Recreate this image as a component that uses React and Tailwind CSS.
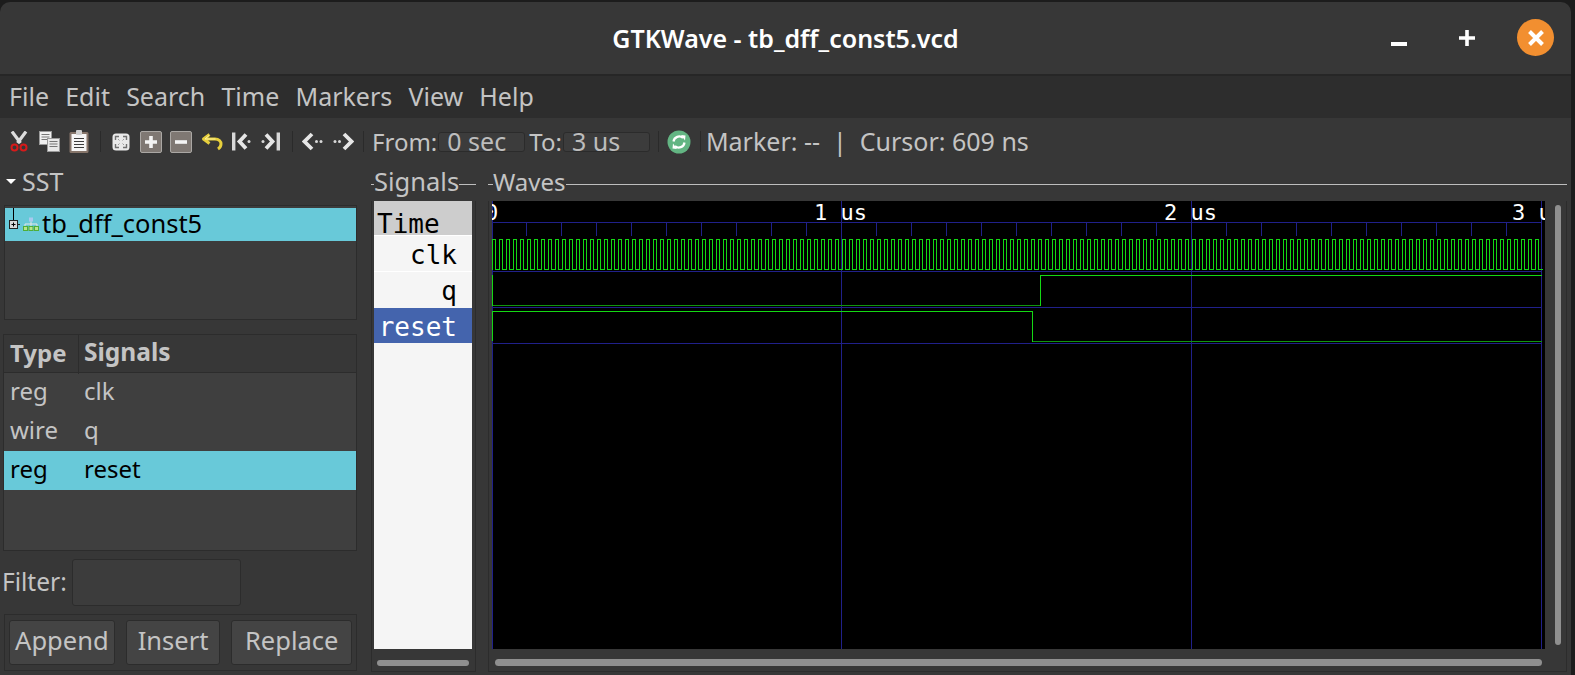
// GTKWave window: title bar, menu, toolbar, SST tree, signal names, wave view
import React from 'react'

const UI_FONT = "font-['Noto_Sans',sans-serif]"
const MONO_FONT = "font-['DejaVu_Sans_Mono',monospace]"
const GRID = '#20208a'
const GREEN = '#14d814'
const GREEN_LOW = '#0f960f'

// clk trace: 7px period, rising edges on the multiples of 7
function clkPath() {
  let d = 'M0.5 68.5'
  for (let x = 0; x < 1049; x += 7) {
    d += ` V38.5 H${x + 3.5} V68.5 H${x + 7.5}`
  }
  return d
}

const TICKS = Array.from({ length: 29 }, (_, i) => i + 1).map((i) => i * 35 - 1)

function WaveView() {
  return (
    <svg width="1053" height="448" className="block shrink-0 bg-black" shapeRendering="crispEdges">
      {/* ruler */}
      <line x1="0" x2="1050" y1="21.5" y2="21.5" stroke={GRID} />
      {TICKS.map((x) => (
        <line key={x} x1={x + 0.5} x2={x + 0.5} y1="21" y2="35" stroke={GRID} />
      ))}
      {/* major grid */}
      <line x1="0.5" x2="0.5" y1="0" y2="448" stroke={GRID} />
      <line x1="349.5" x2="349.5" y1="0" y2="448" stroke={GRID} />
      <line x1="699.5" x2="699.5" y1="0" y2="448" stroke={GRID} />
      <line x1="1049.5" x2="1049.5" y1="0" y2="448" stroke={GRID} />
      {/* row separators */}
      <line x1="0" x2="1050" y1="70.5" y2="70.5" stroke={GRID} />
      <line x1="0" x2="1050" y1="106.5" y2="106.5" stroke={GRID} />
      <line x1="0" x2="1050" y1="142.5" y2="142.5" stroke={GRID} />
      {/* time labels */}
      <g fill="#fff" fontFamily="DejaVu Sans Mono" fontSize="22" shapeRendering="auto">
        <text x="-7" y="19">0</text>
        <text x="322" y="19">1 us</text>
        <text x="672" y="19">2 us</text>
        <text x="1020" y="19">3 us</text>
      </g>
      {/* clk */}
      <path d={clkPath()} fill="none" stroke={GREEN} />
      {/* q */}
      <path d="M0.5 74 V104.5" fill="none" stroke={GREEN} />
      <path d="M0.5 104.5 H548.5" fill="none" stroke={GREEN_LOW} />
      <path d="M548.5 104.5 V74.5 H1050" fill="none" stroke={GREEN} />
      {/* reset */}
      <path d="M0.5 140 V110.5 H540.5 V140.5" fill="none" stroke={GREEN} />
      <path d="M540.5 140.5 H1050" fill="none" stroke={GREEN_LOW} />
    </svg>
  )
}

function Scissors() {
  return (
    <svg width="18" height="21" viewBox="0 0 18 21" className="shrink-0">
      <path d="M2 0.500 L10.500 12 M16 0.500 L7.500 12" stroke="#dcdcdc" strokeWidth="3.200" />
      <circle cx="4.500" cy="16.500" r="3" fill="none" stroke="#d71a1a" strokeWidth="2" />
      <circle cx="13.500" cy="16.500" r="3" fill="none" stroke="#d71a1a" strokeWidth="2" />
    </svg>
  )
}

function Copy() {
  return (
    <svg width="21" height="21" viewBox="0 0 21 21" className="shrink-0">
      <rect x="0.500" y="0.500" width="12" height="13" fill="#f0f0f0" stroke="#9a9a9a" />
      <path d="M2.500 3.500h8M2.500 6h8M2.500 8.500h8" stroke="#777" />
      <rect x="8.500" y="7.500" width="12" height="13" fill="#e8e8e8" stroke="#9a9a9a" />
      <path d="M10.500 10.500h8M10.500 13h8M10.500 15.500h8" stroke="#777" />
    </svg>
  )
}

function Paste() {
  return (
    <svg width="20" height="23" viewBox="0 0 20 23" className="shrink-0">
      <rect x="0.500" y="2" width="19" height="21" rx="1.500" fill="#86756a" />
      <rect x="2.500" y="4" width="15" height="17" fill="#f6f6f6" />
      <rect x="7" y="0" width="6" height="5" rx="1" fill="#cfcfcf" />
      <path d="M5 8.500h10M5 11.500h10M5 14.500h10M5 17.500h10" stroke="#3c3c3c" strokeWidth="1.200" />
    </svg>
  )
}

function ZoomFit() {
  return (
    <svg width="18" height="18" viewBox="0 0 18 18" className="shrink-0">
      <rect x="0.500" y="0.500" width="17" height="17" rx="3.500" fill="#e9e9e9" />
      <path d="M3.500 7V3.500H7M11 3.500h3.500V7M14.500 11v3.500H11M7 14.500H3.500V11" fill="none" stroke="#707070" strokeWidth="1.400" />
      <path d="M6 6l1.500 1.500M12 6l-1.500 1.500M12 12l-1.500-1.500M6 12l1.500-1.500" stroke="#9a9a9a" />
    </svg>
  )
}

function SquareBtn({ plus }) {
  return (
    <svg width="22" height="22" viewBox="0 0 22 22" className="shrink-0">
      <rect x="0.500" y="0.500" width="21" height="21" rx="1.500" fill="#7f7873" stroke="#aaa7a4" />
      <path d={plus ? 'M11 5v12M5 11h12' : 'M5 11h12'} stroke="#f4f4f4" strokeWidth="3.600" />
    </svg>
  )
}

function Undo() {
  return (
    <svg width="22" height="18" viewBox="0 0 22 18" className="shrink-0">
      <path d="M8.500 1.500 2.500 6l6 4.500M3 6h11c4 0 6 2.500 6 5 0 2.500-1.500 4-3 5" fill="none" stroke="#e6cf3c" strokeWidth="3" strokeLinejoin="round" />
      <path d="M8 2.500 4 6h10.500" fill="none" stroke="#fff3a0" strokeWidth="1" />
    </svg>
  )
}

// arrow head with trailing dots; the bar variants stop at a vertical line
function Chevron({ flip, bar }) {
  return (
    <svg width="21" height="19" viewBox="0 0 21 19" className="shrink-0">
      <g transform={flip ? 'translate(21 0) scale(-1 1)' : undefined}>
        {bar ? <rect x="1" y="0.500" width="3.400" height="18" fill="#d8d8d8" /> : null}
        <path d={bar ? 'M15 2.500 8.500 9.500 15 16.500' : 'M10 2 2.500 9.500 10 17'} fill="none" stroke="#e6e6e6" strokeWidth="3.800" />
        <circle cx={bar ? 18 : 14.500} cy="9.500" r="1.500" fill="#d8d8d8" />
        {bar ? null : <circle cx="19" cy="9.500" r="1.500" fill="#d8d8d8" />}
      </g>
    </svg>
  )
}

function Refresh() {
  return (
    <svg width="24" height="24" viewBox="0 0 24 24" className="shrink-0">
      <circle cx="12" cy="12" r="11.500" fill="#63b583" />
      <path d="M6.500 11.500a5.700 5.700 0 0 1 9.500-3.500" fill="none" stroke="#fff" strokeWidth="2.200" />
      <path d="M17.500 12.500a5.700 5.700 0 0 1-9.500 3.500" fill="none" stroke="#fff" strokeWidth="2.200" />
      <path d="M14 5 18.500 5.500 18 10.500ZM10 19 5.500 18.500 6 13.500Z" fill="#fff" />
    </svg>
  )
}

// expander box, its tree line and the module icon in front of the SST row
function TreeIcon() {
  return (
    <svg width="36" height="33" viewBox="0 0 36 33" className="shrink-0">
      <path d="M8.500 0v12" stroke="#000" />
      <rect x="4.500" y="12.500" width="8" height="8" fill="#d9d9d9" stroke="#222" />
      <path d="M6.500 16.500h4M8.500 14.500v4" stroke="#000" />
      <path d="M13 16.500h2" stroke="#222" />
      <rect x="24" y="9.500" width="4" height="4" fill="#a9c9ef" />
      <path d="M26 13.500V16M20 18v-2h12v2M26 16v2" fill="none" stroke="#e6e6e6" />
      <rect x="18.500" y="18.500" width="4" height="4" fill="#b7e58c" stroke="#4fae3a" />
      <rect x="24" y="18.500" width="4" height="4" fill="#b7e58c" stroke="#4fae3a" />
      <rect x="29.500" y="18.500" width="4" height="4" fill="#b7e58c" stroke="#4fae3a" />
    </svg>
  )
}

function Sep() {
  return <div className="h-[21px] w-px shrink-0 bg-[#2a2a2a]" />
}

function Cell({ w, children }) {
  return <div className={`flex shrink-0 justify-center ${w}`}>{children}</div>
}

function TimeField({ w, gap, text }) {
  return (
    <div className={`h-[20px] shrink-0 overflow-hidden rounded-[3px] border border-[#2b2b2b] bg-[#3c3c3c] pl-[8px] text-[25px] leading-[18px] text-[#bdbdbd] ${gap} ${w}`}>
      <span className="block -translate-y-[1px] whitespace-pre">{text}</span>
    </div>
  )
}

function Toolbar() {
  return (
    <div className="flex h-[47px] shrink-0 items-center text-[24px] text-[#c4c4c4]">
      <Cell w="w-[38px]"><Scissors /></Cell>
      <Cell w="w-[22px]"><Copy /></Cell>
      <Cell w="w-[38px]"><Paste /></Cell>
      <div className="ml-[2px]"><Sep /></div>
      <Cell w="w-[40px]"><ZoomFit /></Cell>
      <Cell w="w-[20px]"><SquareBtn plus /></Cell>
      <Cell w="w-[40px]"><SquareBtn /></Cell>
      <Cell w="w-[21px]"><Undo /></Cell>
      <Cell w="w-[39px]"><Chevron bar /></Cell>
      <Cell w="w-[18px]"><Chevron flip bar /></Cell>
      <div className="ml-[13px]"><Sep /></div>
      <Cell w="w-[39px]"><Chevron /></Cell>
      <Cell w="w-[22px]"><Chevron flip /></Cell>
      <div className="ml-[9px]"><Sep /></div>
      <span className="ml-[8px] leading-none">From:</span>
      <TimeField w="w-[87px]" gap="ml-[1px]" text="0 sec" />
      <span className="ml-[4px] leading-none">To:</span>
      <TimeField w="w-[87px]" gap="ml-[1px]" text="3 us" />
      <div className="ml-[8px]"><Sep /></div>
      <div className="ml-[8px]"><Refresh /></div>
      <div className="ml-[9px]"><Sep /></div>
      <span className="ml-[5px] text-[25px] leading-none whitespace-pre">Marker: --  |  Cursor: 609 ns</span>
    </div>
  )
}

function FrameHeader({ label, dash, size }) {
  return (
    <div className="flex h-[36px] items-center">
      <div className={`h-px translate-y-[1px] bg-[#bdbdbd] ${dash}`} />
      <span className={`-translate-y-[1px] leading-none text-[#c4c4c4] ${size}`}>{label}</span>
      <div className="h-px flex-1 translate-y-[1px] bg-[#bdbdbd]" />
    </div>
  )
}

const SIGNAL_ROWS = [
  { name: 'clk', type: 'reg' },
  { name: 'q', type: 'wire' },
  { name: 'reset', type: 'reg', selected: true },
]

export default function App() {
  return (
    <div className={`h-[675px] w-[1575px] overflow-hidden bg-[#1c1c1c] pt-[2px] ${UI_FONT}`}>
      <div className="flex h-[673px] w-[1571px] flex-col rounded-t-[10px] bg-[#373737]">
        {/* Title bar */}
        <div className="relative flex h-[72px] shrink-0 items-center justify-center pt-[1px]">
          <span className="text-[25px] font-semibold text-white">GTKWave - tb_dff_const5.vcd</span>
          <div className="absolute right-[17px] top-[17px] flex h-[37px] w-[37px] items-center justify-center rounded-full bg-[#f28f30]">
            <svg width="20" height="20" viewBox="0 0 20 20"><path d="M3.500 3.500l13 13M16.500 3.500l-13 13" stroke="#fff" strokeWidth="4" /></svg>
          </div>
          <div className="absolute right-[96px] top-[28px] h-[16px] w-[16px]">
            <svg width="16" height="16" viewBox="0 0 16 16"><path d="M0 8h16M8 0v16" stroke="#fff" strokeWidth="3.600" /></svg>
          </div>
          <div className="absolute left-[1391px] top-[40px] h-[4px] w-[16px] bg-white" />
        </div>
        {/* Menu bar */}
        <div className="flex h-[44px] shrink-0 items-center gap-[16.200px] border-t-2 border-[#262626] bg-[#2d2d2d] pb-[2px] pl-[9px] text-[25px] leading-none text-[#c4c4c4]">
          {['File', 'Edit', 'Search', 'Time', 'Markers', 'View', 'Help'].map((m) => (
            <span key={m}>{m}</span>
          ))}
        </div>
        <Toolbar />
        {/* Main panes */}
        <div className="flex min-h-0 flex-1">
          {/* SST pane */}
          <div className="flex w-[371px] shrink-0 flex-col pl-[4px] pr-[14px] text-[24px] leading-none text-[#c4c4c4]">
            <div className="flex h-[40px] items-center gap-[6px] pb-[8px] pl-[2px]">
              <div className="h-0 w-0 border-x-[5px] border-t-[5px] border-x-transparent border-t-white" />
              <span className="text-[25px]">SST</span>
            </div>
            <div className="h-[115px] shrink-0 border border-[#2c2c2c] bg-[#3c3c3c] pt-[2px]">
              <div className="flex h-[33px] items-center bg-[#68c9d9] text-[25.500px] text-black">
                <TreeIcon />
                <span className="ml-[1px] pb-[1px]">tb_dff_const5</span>
              </div>
            </div>
            <div className="mt-[14px] -ml-[1px] flex h-[217px] shrink-0 flex-col border border-[#2c2c2c] bg-[#3f3f3f]">
              <div className="flex h-[38px] shrink-0 items-center border-b border-[#2c2c2c] bg-[#373737] font-bold">
                <span className="w-[75px] border-r border-[#2c2c2c] pb-[3px] pl-[6px] leading-[37px]">Type</span>
                <span className="pb-[3px] pl-[5px] text-[24.500px]">Signals</span>
              </div>
              {SIGNAL_ROWS.map((r) => (
                <div key={r.name} className={`flex h-[39px] items-center pb-[3px] ${r.selected ? 'bg-[#68c9d9] text-black' : ''}`}>
                  <span className="w-[75px] pl-[6px]">{r.type}</span>
                  <span className="pl-[5px]">{r.name}</span>
                </div>
              ))}
            </div>
            <div className="mt-[7px] flex h-[48px] shrink-0 items-center">
              <span className="-ml-[2px] w-[70px] text-[24.500px]">Filter:</span>
              <div className="h-[47px] w-[169px] rounded-[3px] border border-[#2c2c2c] bg-[#3c3c3c]" />
            </div>
            <div className="mt-[8px] flex h-[57px] shrink-0 items-center gap-[11px] border border-[#2c2c2c] px-[4px] text-[25.500px]">
              <div className="flex h-[45px] w-[106px] items-center justify-center rounded-[3px] border border-[#2c2c2c] bg-[#444] pb-[3px]">Append</div>
              <div className="flex h-[45px] w-[95px] items-center justify-center rounded-[3px] border border-[#2c2c2c] bg-[#444] pb-[3px]">Insert</div>
              <div className="flex h-[45px] w-[121px] items-center justify-center rounded-[3px] border border-[#2c2c2c] bg-[#444] pb-[3px]">Replace</div>
            </div>
          </div>

          {/* Signals pane */}
          <div className="flex h-[507px] w-[105px] shrink-0 flex-col">
            <FrameHeader label="Signals" dash="w-[3px]" size="text-[25.500px]" />
            <div className="flex min-h-0 flex-1 flex-col border-x border-b border-[#2c2c2c] pl-[2px] pr-[3px]">
              <div className={`flex h-[448px] shrink-0 flex-col bg-[#f5f5f5] text-[26px] leading-none text-black ${MONO_FONT}`}>
                <div className="flex h-[35px] items-end border-b border-white bg-[#cdcdcd] pl-[3px]"><span className="translate-y-[2px]">Time</span></div>
                <div className="flex h-[36px] items-center justify-end border-b border-white pr-[15px] pt-[2px]">clk</div>
                <div className="flex h-[36px] items-center justify-end pr-[15px] pt-[2px]">q</div>
                <div className="flex h-[35px] items-center justify-end bg-[#4464ad] pr-[15px] pt-[2px] text-white">reset</div>
              </div>
              <div className="flex flex-1 items-center px-[3px] pt-[5px]">
                <div className="h-[6px] w-full rounded-full bg-[#8f8f8f]" />
              </div>
            </div>
          </div>

          {/* Waves pane */}
          <div className="ml-[12px] flex h-[507px] w-[1079px] shrink-0 flex-col">
            <FrameHeader label="Waves" dash="w-[5px]" size="text-[24px]" />
            <div className="flex min-h-0 flex-1 flex-col border-x border-b border-[#2c2c2c] pl-[3px]">
              <div className="flex h-[448px] shrink-0">
                <WaveView />
                <div className="flex flex-1 justify-center py-[4px] pl-[5px]">
                  <div className="w-[6px] rounded-full bg-[#8f8f8f]" />
                </div>
              </div>
              <div className="flex flex-1 items-center pl-[3px] pr-[24px] pt-[5px]">
                <div className="h-[7px] w-full rounded-full bg-[#8f8f8f]" />
              </div>
            </div>
          </div>
        </div>
      </div>
    </div>
  )
}
